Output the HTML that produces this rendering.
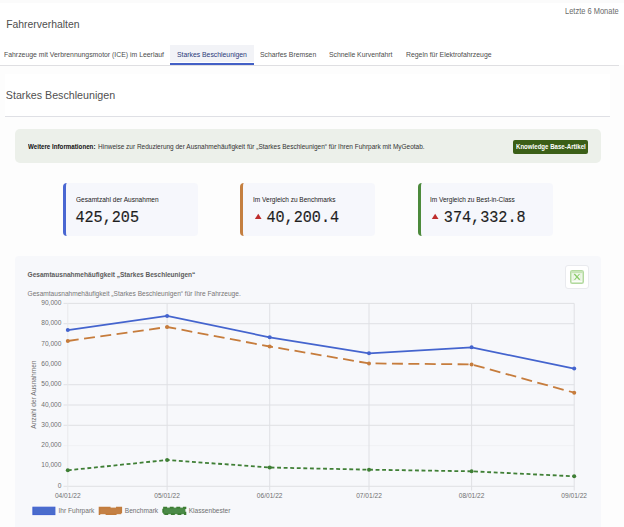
<!DOCTYPE html>
<html><head><meta charset="utf-8">
<style>
*{margin:0;padding:0;box-sizing:border-box}
html,body{width:624px;height:527px;overflow:hidden;background:#fdfdfd;font-family:"Liberation Sans",sans-serif}
.a{position:absolute;white-space:nowrap;line-height:1}
#hdr{position:absolute;left:0;top:0;width:624px;height:65px;background:#fff}
#tabline{position:absolute;left:0;top:65px;width:619px;height:1px;background:#dfdfe2}
#acttab{position:absolute;left:170px;top:44.5px;width:83.5px;height:17.5px;background:#f2f3f7}
#actul{position:absolute;left:170px;top:63.2px;width:83.5px;height:2.6px;background:#4360c6}
#panel{position:absolute;left:5px;top:73.5px;width:605px;height:43px;background:#fff}
#hline{position:absolute;left:5px;top:116px;width:605px;height:1px;background:#dfe0e5}
#info{position:absolute;left:14.6px;top:129.4px;width:586.9px;height:34px;background:#ecf0ea;border-radius:5px}
#btn{position:absolute;left:512.8px;top:139.6px;width:75.7px;height:14.4px;background:#3b5f17;border-radius:2px}
.card{position:absolute;top:183.2px;height:52.6px;width:135px;background:#f6f7fc;border-radius:4px;border-left:3.8px solid}
#chart{position:absolute;left:14.7px;top:255.5px;width:586.3px;height:290px;background:#f7f8fb;border-radius:4px}
#xl{position:absolute;left:565.3px;top:265.3px;width:23.5px;height:23.5px;background:#fff;border:1px solid #e9eaee;border-radius:3px}
</style></head><body>
<div id="hdr"></div>
<div style="position:absolute;left:0;top:0;width:624px;height:3px;background:#fbfbfb"></div>
<div class="a" style="left:6.2px;top:19.5px;font-size:10.4px;color:#4e4e4e">Fahrerverhalten</div>
<div class="a" style="left:564.6px;top:6.74px;font-size:8.4px;color:#6a6a6a;transform:scaleX(0.8929);transform-origin:0 0">Letzte 6 Monate</div>
<div id="acttab"></div>
<div id="actul"></div>
<div id="tabline"></div>
<div class="a" style="left:3.6px;top:50.97px;font-size:7.5px;color:#4d4d4d;transform:scaleX(0.9160);transform-origin:0 0">Fahrzeuge mit Verbrennungsmotor (ICE) im Leerlauf</div>
<div class="a" style="left:176.6px;top:50.93px;font-size:7.5px;color:#2b3a7a;transform:scaleX(0.9107);transform-origin:0 0">Starkes Beschleunigen</div>
<div class="a" style="left:259.8px;top:50.93px;font-size:7.5px;color:#4d4d4d;transform:scaleX(0.9107);transform-origin:0 0">Scharfes Bremsen</div>
<div class="a" style="left:329.3px;top:50.93px;font-size:7.5px;color:#4d4d4d;transform:scaleX(0.9107);transform-origin:0 0">Schnelle Kurvenfahrt</div>
<div class="a" style="left:406.3px;top:50.97px;font-size:7.5px;color:#4d4d4d;transform:scaleX(0.9160);transform-origin:0 0">Regeln für Elektrofahrzeuge</div>

<div id="panel"></div>
<div id="hline"></div>
<div class="a" style="left:5.8px;top:90.0px;font-size:10.7px;color:#505050">Starkes Beschleunigen</div>

<div id="info"></div>
<div class="a" style="left:27.8px;top:143.5px;font-size:7.1px;color:#111;font-weight:bold;transform:scaleX(0.875);transform-origin:0 0">Weitere Informationen:</div>
<div class="a" style="left:97.8px;top:143.2px;font-size:7px;color:#333;transform:scaleX(0.9266);transform-origin:0 0">Hinweise zur Reduzierung der Ausnahmehäufigkeit für „Starkes Beschleunigen“ für Ihren Fuhrpark mit MyGeotab.</div>
<div id="btn"></div>
<div class="a" style="left:515.9px;top:143.0px;font-size:7px;color:#fff;font-weight:bold;transform:scaleX(0.87);transform-origin:0 0">Knowledge Base-Artikel</div>

<div class="card" style="left:63.4px;border-color:#4a67d2"></div>
<div class="card" style="left:240.3px;border-color:#c47f40"></div>
<div class="card" style="left:417.7px;border-color:#4c8a3c"></div>
<div class="a" style="left:75.7px;top:195.87px;font-size:7.3px;color:#222;transform:scaleX(0.8973);transform-origin:0 0">Gesamtzahl der Ausnahmen</div>
<div class="a" style="left:252.9px;top:195.84px;font-size:7.3px;color:#222;transform:scaleX(0.8932);transform-origin:0 0">Im Vergleich zu Benchmarks</div>
<div class="a" style="left:430.4px;top:195.82px;font-size:7.3px;color:#222;transform:scaleX(0.8904);transform-origin:0 0">Im Vergleich zu Best-in-Class</div>
<div class="a" style="left:75.4px;top:208.6px;font-size:15.17px;color:#1e1e1e;font-family:'Liberation Mono',monospace;transform:scaleY(1.14);transform-origin:0 0;-webkit-text-stroke:0.15px #1e1e1e">425,205</div>
<div class="a" style="left:266.4px;top:208.6px;font-size:15.17px;color:#1e1e1e;font-family:'Liberation Mono',monospace;transform:scaleY(1.14);transform-origin:0 0;-webkit-text-stroke:0.15px #1e1e1e">40,200.4</div>
<div class="a" style="left:443.8px;top:208.6px;font-size:15.17px;color:#1e1e1e;font-family:'Liberation Mono',monospace;transform:scaleY(1.14);transform-origin:0 0;-webkit-text-stroke:0.15px #1e1e1e">374,332.8</div>
<svg class="a" style="left:0;top:0" width="624" height="527">
<polygon points="254.9,219 261.6,219 258.25,213.7" fill="#be2d2d"/>
<polygon points="431.8,219 438.5,219 435.15,213.7" fill="#be2d2d"/>
</svg>

<div id="chart"></div>
<div class="a" style="left:27.6px;top:271.6px;font-size:6.55px;color:#5c5c5c;font-weight:bold">Gesamtausnahmehäufigkeit „Starkes Beschleunigen“</div>
<div class="a" style="left:27.6px;top:291.0px;font-size:6.59px;color:#777">Gesamtausnahmehäufigkeit „Starkes Beschleunigen“ für Ihre Fahrzeuge.</div>
<div id="xl"></div>
<svg class="a" style="left:569.8px;top:269.9px" width="14" height="14" viewBox="0 0 14 14">
<rect x="0.75" y="0.75" width="12.5" height="12.5" rx="1.6" fill="#f3f9ef" stroke="#b2d99e" stroke-width="1.5"/>
<rect x="1.2" y="1.2" width="11.6" height="2" fill="#c6e4b5"/>
<path d="M3.2 3.5 V11.5 M10.8 3.5 V11.5" stroke="#dcefd0" stroke-width="0.8"/>
<rect x="2" y="11" width="10" height="1" fill="#fbfdf9"/>
<path d="M4.3 4 L9.7 9.8" stroke="#86c965" stroke-width="1.25"/><path d="M9.5 4 L4.5 9.8" stroke="#8fcf70" stroke-width="1.1"/>
</svg>

<svg id="plot" class="a" style="left:0;top:0" width="624" height="527" font-family="Liberation Sans" font-size="6.6" fill="#707070">
<g stroke="#dfe0e4" stroke-width="1">
<line x1="63.5" y1="303.4" x2="574.2" y2="303.4"/>
<line x1="63.5" y1="323.7" x2="574.2" y2="323.7"/>
<line x1="63.5" y1="384.7" x2="574.2" y2="384.7"/>
<line x1="63.5" y1="405.0" x2="574.2" y2="405.0"/>
<line x1="63.5" y1="425.3" x2="574.2" y2="425.3"/>
<line x1="63.5" y1="445.6" x2="574.2" y2="445.6" stroke="#f0f1f4"/>
<line x1="63.5" y1="486.3" x2="574.2" y2="486.3"/>
<line x1="67.8" y1="303.4" x2="67.8" y2="490.5" stroke="#e8e9ec"/>
<line x1="167.1" y1="303.4" x2="167.1" y2="490.5"/>
<line x1="269.7" y1="303.4" x2="269.7" y2="490.5"/>
<line x1="369.0" y1="303.4" x2="369.0" y2="490.5"/>
<line x1="471.6" y1="303.4" x2="471.6" y2="490.5"/>
<line x1="574.2" y1="303.4" x2="574.2" y2="490.5"/>
</g>
<g text-anchor="end">
<text x="61.4" y="304.9">90,000</text>
<text x="61.4" y="325.2">80,000</text>
<text x="61.4" y="345.5">70,000</text>
<text x="61.4" y="365.8">60,000</text>
<text x="61.4" y="386.2">50,000</text>
<text x="61.4" y="406.5">40,000</text>
<text x="61.4" y="426.8">30,000</text>
<text x="61.4" y="447.1">20,000</text>
<text x="61.4" y="467.4">10,000</text>
<text x="61.4" y="487.8">0</text>
</g>
<g text-anchor="middle">
<text x="67.8" y="498.0">04/01/22</text>
<text x="167.1" y="498.0">05/01/22</text>
<text x="269.7" y="498.0">06/01/22</text>
<text x="369.0" y="498.0">07/01/22</text>
<text x="471.6" y="498.0">08/01/22</text>
<text x="574.2" y="498.0">09/01/22</text>
</g>
<text x="0" y="0" text-anchor="middle" transform="translate(36,394.6) rotate(-90)">Anzahl der Ausnahmen</text>
<polyline fill="none" stroke="#4464ce" stroke-width="1.7" points="67.8,330.1 167.1,315.9 269.7,337.3 369.0,353.3 471.6,347.3 574.2,368.6"/>
<polyline fill="none" stroke="#c67c3c" stroke-width="1.8" stroke-dasharray="10.95 5.47" points="67.8,341.0 167.1,327.0 269.7,346.5 369.0,363.4 471.6,364.4 574.2,392.7"/>
<polyline fill="none" stroke="#3f7f35" stroke-width="1.8" stroke-dasharray="3.9 2.666" points="67.8,470.3 167.1,460.0 269.7,467.5 369.0,469.7 471.6,471.3 574.2,476.3"/>
<g fill="#4464ce"><circle cx="67.8" cy="330.1" r="2"/><circle cx="167.1" cy="315.9" r="2"/><circle cx="269.7" cy="337.3" r="2"/><circle cx="369.0" cy="353.3" r="2"/><circle cx="471.6" cy="347.3" r="2"/><circle cx="574.2" cy="368.6" r="2"/></g>
<g fill="#c67c3c"><circle cx="67.8" cy="341.0" r="2"/><circle cx="167.1" cy="327.0" r="2"/><circle cx="269.7" cy="346.5" r="2"/><circle cx="369.0" cy="363.4" r="2"/><circle cx="471.6" cy="364.4" r="2"/><circle cx="574.2" cy="392.7" r="2"/></g>
<g fill="#3f7f35"><circle cx="67.8" cy="470.3" r="2"/><circle cx="167.1" cy="460.0" r="2"/><circle cx="269.7" cy="467.5" r="2"/><circle cx="369.0" cy="469.7" r="2"/><circle cx="471.6" cy="471.3" r="2"/><circle cx="574.2" cy="476.3" r="2"/></g>
<rect x="32.9" y="507.2" width="22" height="7.4" fill="#4a6ccc" stroke="#3e5fcf" stroke-width="1"/>
<rect x="99.6" y="507.6" width="21.6" height="6.6" fill="#c48044" stroke="#c27c3d" stroke-width="1.8" stroke-dasharray="10.95 5.47"/>
<rect x="163.2" y="507.6" width="22.2" height="6.6" fill="#4b8a47" stroke="#3c7d33" stroke-width="1.8" stroke-dasharray="3.9 2.666"/>
<text x="58.5" y="513.3">Ihr Fuhrpark</text>
<text x="124.8" y="513.3">Benchmark</text>
<text x="188.7" y="513.3">Klassenbester</text>
</svg>
</body></html>
